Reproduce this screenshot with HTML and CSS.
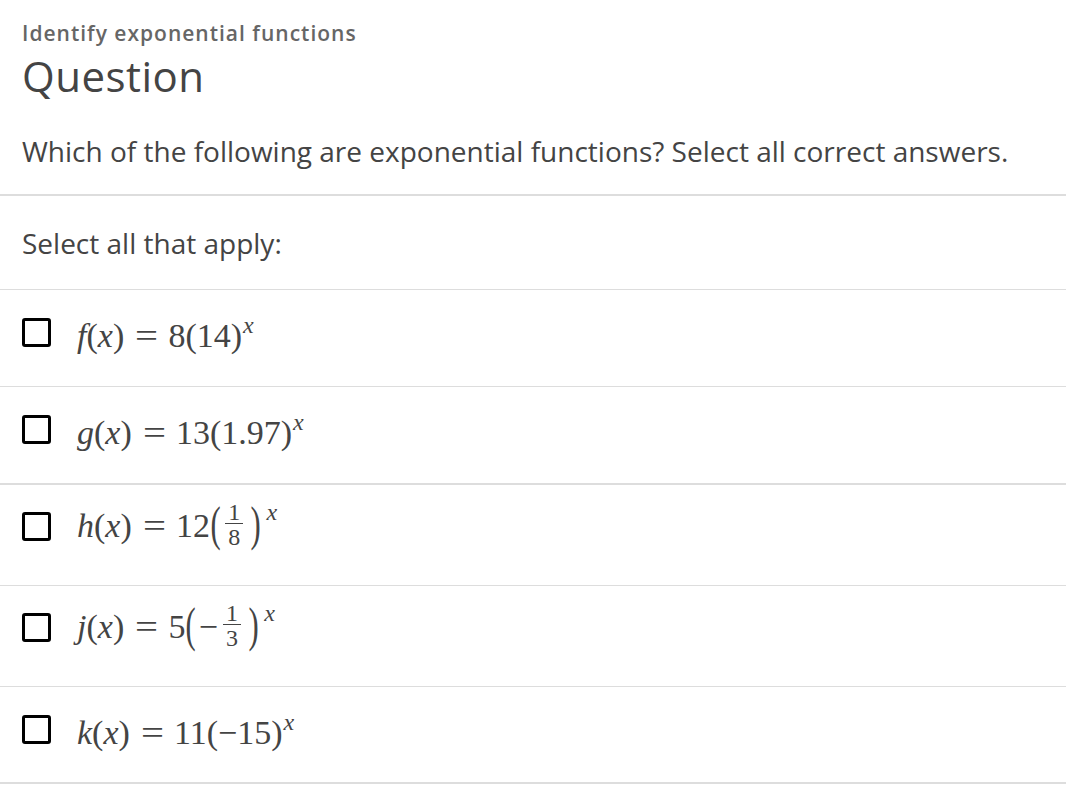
FILE: index.html
```html
<!DOCTYPE html>
<html lang="en">
<head>
<meta charset="utf-8">
<title>Identify exponential functions</title>
<link rel="stylesheet" href="styles.css">
</head>
<body>
<main class="page">
  <header class="head">
    <div class="topic">Identify exponential functions</div>
    <h1 class="title">Question</h1>
    <p class="prompt">Which of the following are exponential functions? Select all correct answers.</p>
  </header>
  <div class="instr">Select all that apply:</div>
  <ul class="choices">
    <li class="choice">
      <span class="box"></span>
      <span class="math"><i>f</i>(<i>x</i>)<span class="eq">=</span>8(14)<sup><i>x</i></sup></span>
    </li>
    <li class="choice sep2">
      <span class="box"></span>
      <span class="math"><i>g</i>(<i>x</i>)<span class="eq">=</span>13(1.97)<sup><i>x</i></sup></span>
    </li>
    <li class="choice tall">
      <span class="box"></span>
      <span class="math"><i>h</i>(<i>x</i>)<span class="eq">=</span>12<span class="bigp">(</span><span class="frac"><span class="num">1</span><span class="den">8</span></span><span class="bigp">)</span><sup class="hi"><i>x</i></sup></span>
    </li>
    <li class="choice tall">
      <span class="box"></span>
      <span class="math"><i>j</i>(<i>x</i>)<span class="eq">=</span>5<span class="bigp">(</span><span class="minus">−</span><span class="frac"><span class="num">1</span><span class="den">3</span></span><span class="bigp">)</span><sup class="hi"><i>x</i></sup></span>
    </li>
    <li class="choice last">
      <span class="box"></span>
      <span class="math"><i>k</i>(<i>x</i>)<span class="eq">=</span>11(−15)<sup><i>x</i></sup></span>
    </li>
  </ul>
</main>
</body>
</html>
```

FILE: styles.css
```css
* { box-sizing: border-box; }
body {
  margin: 0;
  background: #fff;
  font-family: "Open Sans", "Liberation Sans", sans-serif;
  color: #444;
}
.page { width: 1066px; }
.head {
  padding: 19px 22px 0 22px;
  border-bottom: 2px solid #ddd;
  height: 196px;
}
.topic {
  font-size: 21px;
  font-weight: 600;
  color: #666;
  letter-spacing: 1px;
  line-height: 28px;
}
.title {
  margin: 4px 0 0 0;
  font-size: 42px;
  font-weight: 400;
  line-height: 50px;
  color: #444;
  letter-spacing: 0.5px;
}
.prompt {
  margin: 31px 0 0 0;
  font-size: 28px;
  line-height: 38px;
  color: #444;
}
.instr {
  height: 94px;
  padding: 0 22px;
  display: flex;
  align-items: center;
  font-size: 28px;
  line-height: 38px;
  border-bottom: 1px solid #ddd;
}
.choices { list-style: none; margin: 0; padding: 0; }
.choice {
  display: flex;
  align-items: flex-start;
  height: 97px;
  padding: 0 22px;
  border-bottom: 1px solid #ddd;
}
.choice.sep2 { height: 98px; border-bottom-width: 2px; }
.choice.tall { height: 101px; }
.choice.last { height: 97px; border-bottom: 2px solid #ddd; }
.box {
  flex: none;
  width: 29px;
  height: 29px;
  margin-top: 28px;
  border: 3px solid #000;
  border-radius: 3px;
}
.tall .box { margin-top: 27px; }
.math {
  display: block;
  margin-top: 26px;
  margin-left: 26px;
  font-family: "Liberation Serif", "DejaVu Serif", serif;
  font-size: 34px;
  line-height: 39px;
  color: #444;
  white-space: nowrap;
}
.tall .math { margin-top: 21px; }
.math i { font-style: italic; }
.eq {
  display: inline-block;
  transform: scaleX(1.2);
  margin: 0 12px 0 13px;
}
.math sup {
  font-size: 24px;
  line-height: 0;
  vertical-align: 14px;
  margin-left: 1px;
}
.math sup.hi { vertical-align: 17px; margin-left: 5px; }
.bigp {
  display: inline-block;
  line-height: 0;
  transform: scale(0.9, 1.4);
  transform-origin: 50% 3px;
}
.minus { margin: 0 1px 0 2px; }
.frac {
  display: inline-block;
  vertical-align: baseline;
  position: relative;
  top: 8px;
  margin: -24px 7px 0 4px;
  font-size: 24px;
  text-align: center;
}
.num {
  display: block;
  line-height: 20px;
  border-bottom: 1.5px solid #444;
  padding: 0 3px 1px;
}
.den {
  display: block;
  line-height: 20px;
  padding-top: 3px;
}
```
